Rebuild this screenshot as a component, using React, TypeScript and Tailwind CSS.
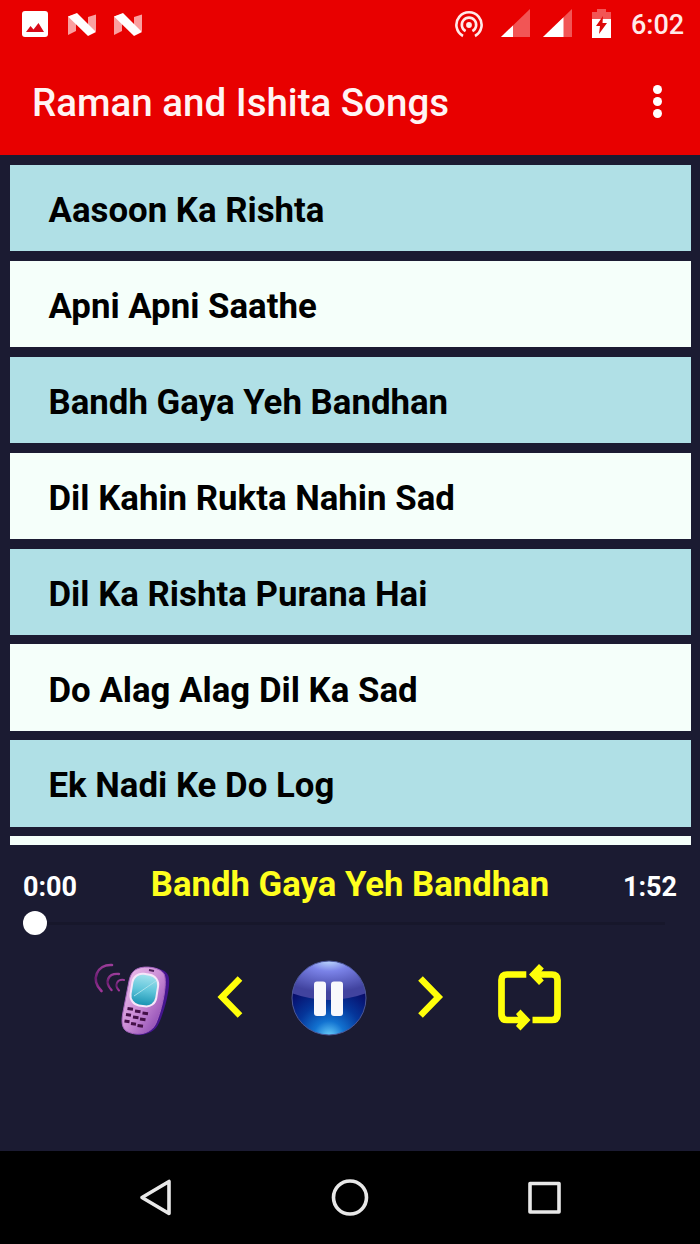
import React from 'react';

const songs = [
  'Aasoon Ka Rishta',
  'Apni Apni Saathe',
  'Bandh Gaya Yeh Bandhan',
  'Dil Kahin Rukta Nahin Sad',
  'Dil Ka Rishta Purana Hai',
  'Do Alag Alag Dil Ka Sad',
  'Ek Nadi Ke Do Log',
];

function NougatIcon() {
  return (
    <svg width="28" height="23" viewBox="0 0 28 23" className="block shrink-0">
      <path d="M0 3.500 L8 1 V18 L0 22 Z M20 4 L28 1.500 V18 L20 22 Z" fill="#fa9f9f" />
      <path d="M0 3.500 L9 0 L28 19 L20 23 Z" fill="#fff" />
    </svg>
  );
}

function SignalIcon({ level }: { level: number }) {
  return (
    <svg width="29" height="28" viewBox="0 0 29 28" className="block shrink-0">
      <path d="M0 28 L29 0 V28 Z" fill="#f25555" />
      <path d={`M0 28 L${level} ${28 - (level * 28) / 29} V28 Z`} fill="#fff" />
    </svg>
  );
}

function StatusBar() {
  return (
    <div className="flex h-12 items-center pl-[22px] pr-4">
      <svg width="26" height="26" viewBox="0 0 26 26" className="mb-px block shrink-0">
        <rect width="26" height="26" rx="3" fill="#fff" />
        <path d="M4 21 L8.5 15 L11.5 18.5 L16.5 12 L22 21 Z" fill="#d80a18" />
      </svg>
      <div className="ml-5 flex gap-[18px]">
        <NougatIcon />
        <NougatIcon />
      </div>
      <svg width="28" height="28" viewBox="0 0 28 28" className="ml-auto block shrink-0" fill="none" stroke="#ffe9e9" strokeWidth="2.6">
        <circle cx="14" cy="15" r="2.9" fill="#ffe9e9" stroke="none" />
        <path d="M10.6 21.2 A7.2 7.2 0 1 1 17.4 21.2" />
        <path d="M8 26 A12.6 12.6 0 1 1 20 26" />
      </svg>
      <div className="mb-0.5 ml-[18px] flex gap-[13px]">
        <SignalIcon level={12} />
        <SignalIcon level={20.5} />
      </div>
      <svg width="19" height="29" viewBox="0 0 19 29" className="mb-px ml-5 block shrink-0">
        <path d="M0 10 V3 H5 V0 H14 V3 H19 V10 Z" fill="#f25555" />
        <path d="M0 10 H19 V29 H0 Z" fill="#fff" />
        <path d="M11 7 L4 17 H8 L7 25 L15 14 H10.5 Z" fill="#dc0808" />
      </svg>
      <span className="ml-5 w-[53px] whitespace-nowrap pt-[3px] text-[27px] font-medium leading-none text-[#ffe9e9]">6:02</span>
    </div>
  );
}

function RingtoneIcon() {
  return (
    <svg width="80" height="76" viewBox="0 0 80 76" className="block shrink-0">
      <defs>
        <linearGradient id="body" x1="0" y1="0" x2="1" y2="1">
          <stop offset="0" stopColor="#f2c8ee" />
          <stop offset=".5" stopColor="#cb8dd6" />
          <stop offset="1" stopColor="#7a35a8" />
        </linearGradient>
        <linearGradient id="screen" x1="0" y1="0" x2="0" y2="1">
          <stop offset="0" stopColor="#a5e3ee" />
          <stop offset=".5" stopColor="#5fc5da" />
          <stop offset="1" stopColor="#1590b0" />
        </linearGradient>
        <linearGradient id="wave" x1="0" y1="0" x2="0" y2="1">
          <stop offset="0" stopColor="#9c3c9a" />
          <stop offset=".5" stopColor="#6a1d70" />
          <stop offset="1" stopColor="#a0359a" />
        </linearGradient>
      </defs>
      <g fill="none" stroke="url(#wave)" strokeLinecap="round">
        <path d="M19 5 C4 4 -3 20 8.500 31" strokeWidth="2.600" />
        <path d="M26 14 C15 13 11 22 18.500 30" strokeWidth="2.400" />
        <path d="M31 20 C24 19 21 25 26 30.500" strokeWidth="2" />
      </g>
      {/* dark side of the handset, then its face */}
      <path d="M49 8 C56 6 72 8 75 15 C79 23 72 50 66 63 C62 73 48 78 38 73 C32 69 32 61 34 53 L41 21 C42 15 44 10 49 8 Z" fill="#45158f" />
      <path d="M45 8.500 C52 5.500 67 7 71 14 C75 22 69 50 63 63 C59 73 45 77 34 71.500 C28 68 28.500 60 30 52 L36 21 C37.500 14 40 10.500 45 8.500 Z" fill="url(#body)" stroke="#a565bd" />
      <path d="M56 10 L61 11" stroke="#51235e" strokeWidth="1.800" />
      <rect x="38.500" y="14" width="26" height="32" rx="10" fill="url(#screen)" stroke="#f6e6fa" strokeWidth="2" transform="rotate(9 51 29)" />
      <path d="M41 36 L63 21" stroke="#a8e1eb" strokeWidth="1" />
      <g stroke="#431047" strokeWidth="3">
        <path d="M34.500 48.500 l5.500 .8 M42 51 l5.500 .8 M49.500 53 l5.500 .8" />
        <path d="M33 54.500 l5 .8 M40 57 l5.500 .8 M47 59 l5.500 .8" />
        <path d="M31.500 61 l5 .8 M38 63.500 l5 .8 M44.500 65.500 l5.500 .8" />
      </g>
    </svg>
  );
}

function PauseIcon() {
  return (
    <svg width="76" height="76" viewBox="0 0 76 76" className="block shrink-0">
      <defs>
        <radialGradient id="ball" cx=".5" cy="1.020" r=".75">
          <stop offset="0" stopColor="#6cd2fc" />
          <stop offset=".28" stopColor="#1272d0" />
          <stop offset=".6" stopColor="#05369a" />
          <stop offset="1" stopColor="#080b68" />
        </radialGradient>
        <radialGradient id="gloss" cx=".5" cy="0" r=".8">
          <stop offset="0" stopColor="#c0deff" />
          <stop offset=".35" stopColor="#7b83e8" />
          <stop offset="1" stopColor="#41439f" />
        </radialGradient>
        <clipPath id="disc">
          <circle cx="38" cy="38" r="37" />
        </clipPath>
      </defs>
      <circle cx="38" cy="38" r="37" fill="url(#ball)" />
      <path d="M0 0 H76 V33 Q38 47 0 33 Z" fill="url(#gloss)" clipPath="url(#disc)" />
      <circle cx="38" cy="38" r="37" fill="none" stroke="#4c5796" />
      <rect x="23" y="21.500" width="12" height="34.500" rx="3" fill="#f8f8fc" />
      <rect x="40" y="21.500" width="12" height="34.500" rx="3" fill="#f8f8fc" />
    </svg>
  );
}

function Chevron({ d }: { d: string }) {
  return (
    <svg width="26" height="42" viewBox="0 0 26 42" className="mb-0.5 block shrink-0" fill="none" stroke="#ffff0a" strokeWidth="6.5">
      <path d={d} />
    </svg>
  );
}

function RepeatIcon() {
  return (
    <svg width="64" height="68" viewBox="0 0 64 68" className="block shrink-0" fill="none" stroke="#ffff0a" strokeWidth="6.7">
      <path d="M28.300 10.500 H9 Q3.500 10.500 3.500 16 V50 Q3.500 56 9 56 H25" />
      <path d="M34.500 56 H54 Q59.500 56 59.500 50 V16 Q59.500 10.500 54 10.500 H38" />
      <path d="M31 10.500 L41 0 L45.800 4.500 L43 8 V13 L45.800 16.500 L41 21 Z" fill="#ffff0a" stroke="none" />
      <path d="M32.500 56 L22.500 45.500 L18 50 L20.500 53.500 V58.500 L18 62 L22.500 66.500 Z" fill="#ffff0a" stroke="none" />
    </svg>
  );
}

function Player() {
  return (
    <div className="flex h-[306px] flex-col">
      <div className="flex h-[68px] items-center justify-between px-[23px] pt-3 font-bold">
        <span className="w-[54px] whitespace-nowrap pt-1 text-[27px] leading-8 text-white">0:00</span>
        <span className="whitespace-nowrap pb-0.5 text-[34.7px] leading-10 text-[#ffff1e]">Bandh Gaya Yeh Bandhan</span>
        <span className="w-[54px] whitespace-nowrap pt-1 text-[27px] leading-8 text-white">1:52</span>
      </div>
      <div className="-mt-0.5 flex h-6 items-center pl-[23px] pr-[35px]">
        <div className="size-6 shrink-0 rounded-full bg-white" />
        <div className="h-[3px] flex-1 bg-[#17172b]" />
      </div>
      <div className="mt-[25px] flex h-[76px] items-center pl-[93px]">
        <RingtoneIcon />
        <div className="ml-11">
          <Chevron d="M23 2.500 L5 21 L23 39.500" />
        </div>
        <div className="ml-[48px]">
          <PauseIcon />
        </div>
        <div className="ml-[51px]">
          <Chevron d="M2.500 2.500 L20.500 21 L2.500 39.500" />
        </div>
        <div className="ml-[54px]">
          <RepeatIcon />
        </div>
      </div>
    </div>
  );
}

function NavBar() {
  return (
    <div className="flex h-[93px] items-center justify-between bg-black pl-[138px] pr-[139px]">
      <svg width="34" height="38" viewBox="0 0 34 38" fill="none" stroke="#e8e8e8" strokeWidth="3.6" strokeLinejoin="round">
        <path d="M4 18.500 L31 2.500 V34.500 Z" />
      </svg>
      <svg width="38" height="38" viewBox="0 0 38 38" fill="none" stroke="#e8e8e8" strokeWidth="3.6">
        <circle cx="19" cy="18.500" r="16.500" />
      </svg>
      <svg width="34" height="34" viewBox="0 0 34 34" fill="none" stroke="#e8e8e8" strokeWidth="3.6" strokeLinejoin="round">
        <rect x="3" y="2.500" width="29" height="28.500" />
      </svg>
    </div>
  );
}

export default function App() {
  return (
    <div className="flex h-[1244px] w-[700px] flex-col overflow-hidden bg-[#1b1b32] font-[Roboto,sans-serif]">
      <header className="h-[155px] shrink-0 bg-[#e80000]">
        <StatusBar />
        <div className="flex h-[107px] items-center justify-between pl-8 pr-[38px]">
          <h1 className="whitespace-nowrap pt-[3px] text-[38.5px] font-medium leading-none text-[#fff4f4]">Raman and Ishita Songs</h1>
          <div className="flex flex-col gap-[3px]">
            <div className="size-[9px] rounded-full bg-white" />
            <div className="size-[9px] rounded-full bg-white" />
            <div className="size-[9px] rounded-full bg-white" />
          </div>
        </div>
      </header>
      <ul className="flex h-[690px] shrink-0 flex-col gap-[9.6px] overflow-hidden px-[9.5px] pt-[10px]">
        {songs.map((song) => (
          <li key={song} className="flex h-[86.300px] shrink-0 items-center whitespace-nowrap bg-[#f5fffa] pl-[39px] pt-1 text-[34.8px] font-bold text-black odd:bg-[#b0e0e6]">
            {song}
          </li>
        ))}
        <li className="h-[86.300px] shrink-0 bg-[#f5fffa]" />
      </ul>
      <Player />
      <NavBar />
    </div>
  );
}
